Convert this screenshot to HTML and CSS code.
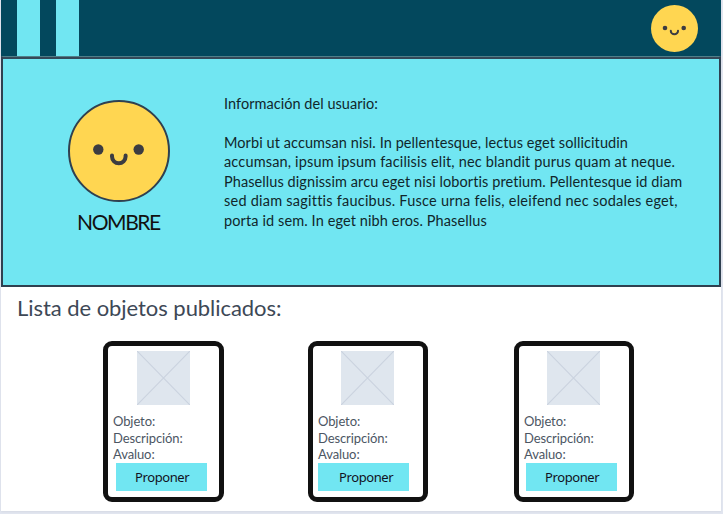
FILE: index.html
```html
<!DOCTYPE html>
<html lang="es">
<head>
<meta charset="utf-8">
<title>Perfil de usuario</title>
<link rel="stylesheet" href="styles.css">
</head>
<body>
<div class="page">
  <header class="topbar">
    <div class="stripes"><i class="stripe"></i><i class="stripe"></i></div>
    <svg class="avatar-small" viewBox="0 0 47 47"><circle cx="23.500" cy="23.500" r="23.500" fill="#ffd651"/><circle cx="14" cy="23" r="2.300" fill="#3c3c41"/><circle cx="32.700" cy="23" r="2.300" fill="#3c3c41"/><path d="M19.800 25.700v.4a3.600 3.200 0 0 0 7.200 0v-.4" fill="none" stroke="#3c3c41" stroke-width="2" stroke-linecap="round"/></svg>
  </header>
  <section class="profile">
    <div class="identity">
      <svg class="avatar" viewBox="0 0 102 102"><circle cx="51" cy="51" r="50" fill="#ffd651" stroke="#2f4050" stroke-width="2"/><circle cx="30.300" cy="49.500" r="5.200" fill="#3c3c41"/><circle cx="70.700" cy="49.500" r="5.200" fill="#3c3c41"/><path d="M44 55.500v1a6.800 6.800 0 0 0 13.600 0v-1" fill="none" stroke="#3c3c41" stroke-width="4" stroke-linecap="round"/></svg>
      <h1 class="name">NOMBRE</h1>
    </div>
    <div class="info">
      <p class="line line-title">Información del usuario:</p>
      <p class="line l1">Morbi ut accumsan nisi. In pellentesque, lectus eget sollicitudin</p>
      <p class="line l2">accumsan, ipsum ipsum facilisis elit, nec blandit purus quam at neque.</p>
      <p class="line l3">Phasellus dignissim arcu eget nisi lobortis pretium. Pellentesque id diam</p>
      <p class="line l4">sed diam sagittis faucibus. Fusce urna felis, eleifend nec sodales eget,</p>
      <p class="line l5">porta id sem. In eget nibh eros. Phasellus</p>
    </div>
  </section>
  <h2 class="list-title">Lista de objetos publicados:</h2>
  <main class="cards">
    <article class="card card-first">
      <svg class="thumb" viewBox="0 0 53 54"><path fill="#dfe6ee" d="M0 0h53v54H0z"/><path d="M0 0l53 54M53 0L0 54" stroke="#cbd3df" stroke-width="1.200"/></svg>
      <p class="field">Objeto:</p><p class="field">Descripción:</p><p class="field">Avaluo:</p>
      <button class="propose">Proponer</button>
    </article>
    <article class="card card-mid">
      <svg class="thumb" viewBox="0 0 53 54"><path fill="#dfe6ee" d="M0 0h53v54H0z"/><path d="M0 0l53 54M53 0L0 54" stroke="#cbd3df" stroke-width="1.200"/></svg>
      <p class="field">Objeto:</p><p class="field">Descripción:</p><p class="field">Avaluo:</p>
      <button class="propose">Proponer</button>
    </article>
    <article class="card">
      <svg class="thumb" viewBox="0 0 53 54"><path fill="#dfe6ee" d="M0 0h53v54H0z"/><path d="M0 0l53 54M53 0L0 54" stroke="#cbd3df" stroke-width="1.200"/></svg>
      <p class="field">Objeto:</p><p class="field">Descripción:</p><p class="field">Avaluo:</p>
      <button class="propose">Proponer</button>
    </article>
  </main>
</div>
</body>
</html>
```
FILE: styles.css
```css
* { box-sizing: border-box; }
body { margin: 0; height: 514px; overflow: hidden; background: #e2e6f0; font-family: Lato, "Liberation Sans", sans-serif; }
h1, h2, p { margin: 0; font-weight: 400; white-space: nowrap; }
svg { display: block; }
.page { width: 720px; height: 511px; margin-left: 1px; background: #fff; box-shadow: 0 1px 2px #d5d9e4; }
.topbar { height: 56px; background: #03485d; display: flex; justify-content: space-between; padding: 0 23px 0 16px; }
.stripes { display: flex; gap: 16px; }
.stripe { width: 23px; background: #71e6f2; }
.avatar-small { width: 47px; height: 47px; margin-top: 5px; }
.profile { height: 231px; border: 2px solid #2f4050; border-top: 1px solid #4f7f89; background: #71e6f2; box-shadow: inset 0 2px #344858; display: flex; }
.identity { width: 221px; padding: 43px 0 0 65px; }
.avatar { width: 102px; height: 102px; }
.name { width: 102px; margin-top: 7px; padding-left: 9px; font-size: 21px; line-height: 26px; color: #111; letter-spacing: -1.400px; }
.info { padding-top: 36.500px; color: #10262b; font-size: 14.500px; line-height: 19.500px; }
.line { font-variant-ligatures: none; }
.line-title { margin-bottom: 19.500px; letter-spacing: 0.040px; }
.l1 { letter-spacing: 0.080px; }
.l2 { letter-spacing: 0.155px; }
.l3 { letter-spacing: 0.080px; }
.l4 { letter-spacing: 0.230px; }
.l5 { letter-spacing: 0.110px; }
.list-title { margin: 6px 0 0 16px; height: 30px; line-height: 29px; font-size: 22px; letter-spacing: -0.050px; color: #3d4856; }
.cards { display: flex; padding: 18px 0 0 102px; }
.card { width: 120px; height: 161px; border: 5px solid #111; border-radius: 9px; padding: 5px 0 0 5px; }
.card-first { width: 121px; margin-right: 84px; }
.card-mid { margin-right: 86px; }
.thumb { width: 53px; height: 54px; margin: 0 0 8px 23px; }
.card-first .thumb { margin-left: 24px; }
.field { height: 16.600px; line-height: 17px; font-size: 13px; letter-spacing: -0.100px; color: #4c5663; }
.propose { display: block; width: 91px; height: 28px; margin: 0 0 0 2px; padding: 0 0 0 19px; border: 0; background: #71e6f2; font: 13px/29px "Noto Sans", sans-serif; letter-spacing: -0.400px; text-align: left; color: #112; }
.card-first .propose { margin-left: 3px; }
.card-mid .propose { margin-left: 0; padding-left: 21px; }
```
